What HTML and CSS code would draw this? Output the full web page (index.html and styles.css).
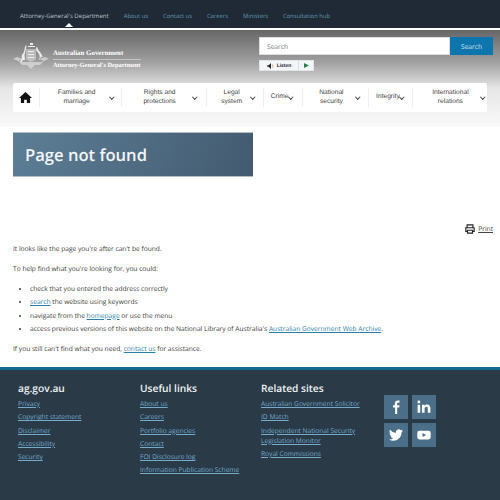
FILE: index.html
```html
<!DOCTYPE html>
<html lang="en">

<head>
  <meta charset="UTF-8">
  <meta name="viewport" content="width=device-width, initial-scale=1.0">
  <title>Page not found</title>
  <link rel="stylesheet" href="styles.css">
</head>

<body>
  <nav class="topbar">
    <a class="topbar__item topbar__item--active" href="#">Attorney-General's Department</a>
    <a class="topbar__item" href="#">About us</a>
    <a class="topbar__item" href="#">Contact us</a>
    <a class="topbar__item" href="#">Careers</a>
    <a class="topbar__item" href="#">Ministers</a>
    <a class="topbar__item" href="#">Consultation hub</a>
  </nav>

  <header class="masthead">
    <div class="masthead__row">
      <div class="brand">
        <svg class="brand__crest" viewBox="0 0 36 27" aria-hidden="true">
          <g fill="#eee">
            <path d="M17 0h3v2h-3zM15 3h7v1h-7z" />
            <path d="M13 6h10v9c0 2-3 3-5 4-2-1-5-2-5-4z" opacity=".45" />
            <path d="M15 8h6v1h-6zM15 11h6v1h-6zM15 14h6v1h-6z" />
            <path d="M10 17c-1-1-2-2-1-5l2-3 1-5 1-2 .5 1-1 5-1 4 .5 5zM7 19l2-4 1 1-1 3z" />
            <path d="M26 17c1-2 1-4 0-6l-3-4 .5-3 1 .5 .5 2 3 4 2 4-2-1-1 3z" />
            <path d="M0 16l4-2 3 1 2 2-3 0 1 2-4-2zM36 16l-4-2-3 1-2 2 3 0-1 2 4-2z" opacity=".6" />
            <path d="M6 19h24l-3 3h-5l-4 4-4-4H9z" opacity=".55" />
          </g>
        </svg>
        <div class="brand__text">
          <span class="brand__gov">Australian Government</span>
          <span class="brand__dept">Attorney-General's Department</span>
        </div>
      </div>
      <div class="tools">
        <form class="search">
          <input class="search__input" type="text" placeholder="Search">
          <button class="search__btn" type="button">Search</button>
        </form>
        <div class="listen">
          <span class="listen__label">
            <svg class="listen__icon" viewBox="0 0 10 8" aria-hidden="true">
              <path d="M0 3h2l3-3v8L2 5H0z" fill="#222" />
              <path d="M6.5 1.5c1.5 1.5 1.5 3.500 0 5" fill="none" stroke="#d98" stroke-width="1" />
            </svg>
            Listen
          </span>
          <span class="listen__play">
            <svg viewBox="0 0 6 6" class="listen__arrow" aria-hidden="true">
              <path d="M0 0l6 3-6 3z" fill="#2e7d4f" />
            </svg>
          </span>
        </div>
      </div>
    </div>

    <ul class="menu">
      <li class="menu__item menu__item--home">
        <svg class="menu__home" viewBox="0 0 24 24" aria-hidden="true">
          <path d="M12 2 0 13h3.5v9h6v-6h5v6h6v-9H24z" fill="#111" />
        </svg>
      </li>
      <li class="menu__item menu__item--a"><span>Families and<br>marriage</span><i class="chev"></i></li>
      <li class="menu__item menu__item--b"><span>Rights and<br>protections</span><i class="chev"></i></li>
      <li class="menu__item menu__item--c"><span>Legal<br>system</span><i class="chev"></i></li>
      <li class="menu__item menu__item--d"><span>Crime</span><i class="chev"></i></li>
      <li class="menu__item menu__item--e"><span>National<br>security</span><i class="chev"></i></li>
      <li class="menu__item menu__item--f"><span>Integrity</span><i class="chev"></i></li>
      <li class="menu__item menu__item--g"><span>International<br>relations</span><i class="chev"></i></li>
    </ul>
  </header>

  <main class="content">
    <h1 class="banner">Page not found</h1>

    <div class="print">
      <svg class="print__icon" viewBox="0 0 12 12" aria-hidden="true">
        <path d="M2.5 4V1h7v3M2.5 9H1V4.500h10V9H9.500" fill="none" stroke="#222" stroke-width="1.4" />
        <path d="M3 7.500h6V11H3z" fill="none" stroke="#222" stroke-width="1.4" />
      </svg>
      <a href="#">Print</a>
    </div>

    <p>It looks like the page you're after can't be found.</p>
    <p>To help find what you're looking for, you could:</p>
    <ul class="content__list">
      <li>check that you entered the address correctly</li>
      <li><a href="#">search</a> the website using keywords</li>
      <li>navigate from the <a href="#">homepage</a> or use the menu</li>
      <li>access previous versions of this website on the National Library of Australia's <a href="#">Australian Government Web Archive</a>.</li>
    </ul>
    <p>If you still can't find what you need, <a href="#">contact us</a> for assistance.</p>
  </main>

  <footer class="footer">
    <section class="footer__col footer__col--a">
      <h2>ag.gov.au</h2>
      <a href="#">Privacy</a>
      <a href="#">Copyright statement</a>
      <a href="#">Disclaimer</a>
      <a href="#">Accessibility</a>
      <a href="#">Security</a>
    </section>
    <section class="footer__col footer__col--b">
      <h2>Useful links</h2>
      <a href="#">About us</a>
      <a href="#">Careers</a>
      <a href="#">Portfolio agencies</a>
      <a href="#">Contact</a>
      <a href="#">FOI Disclosure log</a>
      <a href="#">Information Publication Scheme</a>
    </section>
    <section class="footer__col footer__col--c">
      <h2>Related sites</h2>
      <a href="#">Australian Government Solicitor</a>
      <a href="#">ID Match</a>
      <a href="#">Independent National Security Legislation Monitor</a>
      <a href="#">Royal Commissions</a>
    </section>
    <div class="social">
      <a class="social__btn" href="#" aria-label="Facebook">
        <svg viewBox="0 0 24 24"><path d="M14 24V13h3.500l.5-4h-4V6.500c0-1.200.4-2 2-2h2V1c-.5 0-1.700-.2-3-.2-3 0-5 1.800-5 5V9H7v4h3.500v11z" fill="#fff" /></svg>
      </a>
      <a class="social__btn" href="#" aria-label="LinkedIn">
        <svg viewBox="0 0 24 24"><path d="M1 8h4.500v14H1zM3.200 1a2.500 2.500 0 1 1 0 5 2.500 2.500 0 0 1 0-5zM8.500 8h4.300v2c.7-1.200 2.200-2.400 4.500-2.400 4.500 0 5.700 3 5.700 6.900V22h-4.500v-6.700c0-1.700 0-3.800-2.300-3.800s-3.200 1.800-3.200 3.700V22H8.500z" fill="#fff" /></svg>
      </a>
      <a class="social__btn" href="#" aria-label="Twitter">
        <svg viewBox="0 0 24 24"><path d="M24 4.600a10 10 0 0 1-2.800.8 5 5 0 0 0 2.200-2.700 10 10 0 0 1-3.100 1.200 4.900 4.900 0 0 0-8.400 4.500A14 14 0 0 1 1.700 3.200a4.900 4.900 0 0 0 1.500 6.600 5 5 0 0 1-2.200-.6 4.900 4.900 0 0 0 3.900 4.900 5 5 0 0 1-2.200.1 4.900 4.900 0 0 0 4.600 3.400A10 10 0 0 1 0 19.600 14 14 0 0 0 7.500 21.800c9 0 14-7.500 14-14v-.6A10 10 0 0 0 24 4.600z" fill="#fff" /></svg>
      </a>
      <a class="social__btn" href="#" aria-label="YouTube">
        <svg viewBox="0 0 24 24"><path fill-rule="evenodd" d="M4 4.500h16a3.500 3.500 0 0 1 3.500 3.500v8a3.500 3.500 0 0 1-3.500 3.500H4A3.500 3.500 0 0 1 .5 16V8A3.500 3.500 0 0 1 4 4.500zM9.500 8.500v7l6-3.500z" fill="#fff" /></svg>
      </a>
    </div>
  </footer>
</body>

</html>
```

FILE: styles.css
```css
* {
  box-sizing: border-box;
}

html,
body {
  margin: 0;
  height: 500px;
  overflow: hidden;
}

body {
  font-family: "Open Sans", sans-serif;
  font-size: 6.65px;
  color: #3a3a3a;
  background: #fff;
  text-rendering: geometricPrecision;
}

a {
  color: #2a7fa8;
}

/* top bar */
.topbar {
  display: flex;
  align-items: center;
  gap: 15px;
  height: 30px;
  padding: 4px 0 0 20px;
  background: #1f2a36;
  border-bottom: 2px solid #fff;
}

.topbar__item {
  color: #5d9bb8;
  font-size: 5.85px;
  text-decoration: none;
  white-space: nowrap;
}

.topbar__item--active {
  position: relative;
  font-size: 6.05px;
  color: #b8c4cc;
}

.topbar__item--active::after {
  content: "";
  position: absolute;
  left: 44.5px;
  top: 10.5px;
  border: 4.5px solid transparent;
  border-top: 0;
  border-bottom-color: #fff;
}

/* header */
.masthead {
  height: 97px;
  padding: 7px 13px 0;
  background: linear-gradient(#666, #a0a0a0 33%, #e6e6e6 60%, #fafafa);
}

.masthead__row {
  display: flex;
  justify-content: space-between;
  height: 46px;
}

.brand {
  display: flex;
  align-items: flex-start;
  gap: 4px;
  margin-top: 6px;
}

.brand__crest {
  width: 36px;
  height: 27px;
}

.brand__text {
  display: flex;
  flex-direction: column;
  margin-top: 7px;
  font-family: "Liberation Serif", serif;
  font-weight: bold;
  font-size: 6.4px;
  color: #fff;
}

.brand__gov {
  padding-bottom: 1.5px;
  font-size: 6.9px;
  border-bottom: 1px solid #c4c4c4;
}

.brand__dept {
  padding-top: 2px;
}

.tools {
  width: 234px;
  margin-right: -6px;
}

.search {
  display: flex;
  height: 18px;
}

.search__input {
  flex: 1;
  min-width: 0;
  padding: 0 7px;
  border: 1px solid #ddd;
  background: #fff;
  font-family: inherit;
  font-size: 6.65px;
  text-rendering: geometricPrecision;
}

.search__input::placeholder {
  color: #777;
}

.search__btn {
  width: 43px;
  border: none;
  background: #0f75ad;
  color: #d5e8f2;
  font-family: inherit;
  font-size: 6.65px;
  text-rendering: geometricPrecision;
}

.listen {
  display: flex;
  width: 55px;
  height: 11px;
  margin-top: 5px;
  background: #f4f7f8;
  border: 1px solid #e2e6e8;
}

.listen__label {
  display: flex;
  align-items: center;
  justify-content: center;
  gap: 2px;
  width: 39px;
  font-family: "Liberation Sans", sans-serif;
  font-size: 5px;
  font-weight: bold;
  color: #223;
  border-right: 1px solid #ddd;
}

.listen__icon {
  width: 8px;
  height: 6px;
}

.listen__play {
  flex: 1;
  display: flex;
  align-items: center;
  justify-content: center;
}

.listen__arrow {
  width: 5px;
  height: 5px;
}

/* main menu */
.menu {
  display: flex;
  height: 29px;
  margin: 0;
  padding: 5px 0;
  list-style: none;
  background: #fff;
  border-radius: 2px;
  font-family: "Liberation Sans", sans-serif;
  font-size: 6.65px;
  line-height: 8.7px;
  color: #444;
}

.menu__item {
  display: flex;
  align-items: center;
  justify-content: center;
  gap: 2px;
  border-left: 1px solid #eee;
  text-align: center;
}

.menu__item--home {
  width: 25.5px;
  border-left: none;
}

.menu__home {
  width: 13px;
  height: 13px;
}

.menu__item span {
  flex: 1;
}

.menu__item--a { width: 82.5px; padding: 0 7px 0 6.5px; }
.menu__item--b { width: 85px; padding: 0 8.5px 0 6.5px; }
.menu__item--c { width: 57px; padding: 0 8px; }
.menu__item--d { width: 39px; padding: 0 9px 0 7px; gap: 0; }
.menu__item--e { width: 66px; padding: 0 7.5px 0 6px; }
.menu__item--f { width: 44px; padding: 0 7.5px 0 7px; gap: 0; }
.menu__item--g { width: 75px; padding: 0 1.5px 0 9px; }

.chev {
  flex: none;
  width: 3.5px;
  height: 3.5px;
  margin: -2.5px .6px 0;
  border-right: 1px solid #444;
  border-bottom: 1px solid #444;
  transform: rotate(45deg);
}

/* content */
.content {
  height: 240px;
  padding: 5px 13px 0;
}

.banner {
  width: 240px;
  height: 45px;
  margin: 0;
  padding: 0 12px;
  font-size: 16.6px;
  font-weight: 600;
  line-height: 43px;
  color: #f4f6f8;
  background: linear-gradient(110deg, #5c7f96, #435a70);
  border: 1px solid #b4bdc4;
  border-width: 1px 0;
}

.print {
  display: flex;
  justify-content: flex-end;
  align-items: center;
  gap: 3px;
  height: 13.3px;
  margin: 45px -6px 0 0;
}

.print a {
  color: #444;
}

.print__icon {
  width: 10px;
  height: 10px;
}

.content p {
  margin: 6.7px 0 0;
  line-height: 13.3px;
}

.content__list {
  margin: 6.7px 0 0;
  padding-left: 17px;
  line-height: 13.3px;
}

/* footer */
.footer {
  display: flex;
  height: 133px;
  padding: 11px 0 0 18px;
  background: #2a3a47;
  border-top: 3px solid #13688f;
  color: #fff;
}

.footer h2 {
  margin: 0 0 3px;
  font-size: 10.2px;
  font-weight: 600;
  line-height: 15px;
  color: #f0f3f5;
}

.footer__col a {
  display: block;
  margin-bottom: 3.3px;
  color: #74acce;
  line-height: 10px;
}

.footer__col--a { width: 122px; }
.footer__col--b { width: 121px; }
.footer__col--c { width: 123px; }

.social {
  display: grid;
  grid-template-columns: 24px 24px;
  grid-auto-rows: 24px;
  gap: 4px;
  margin-top: 14px;
}

.social__btn {
  display: flex;
  align-items: center;
  justify-content: center;
  background: #4c6f89;
}

.social__btn svg {
  width: 14px;
  height: 14px;
}
```
